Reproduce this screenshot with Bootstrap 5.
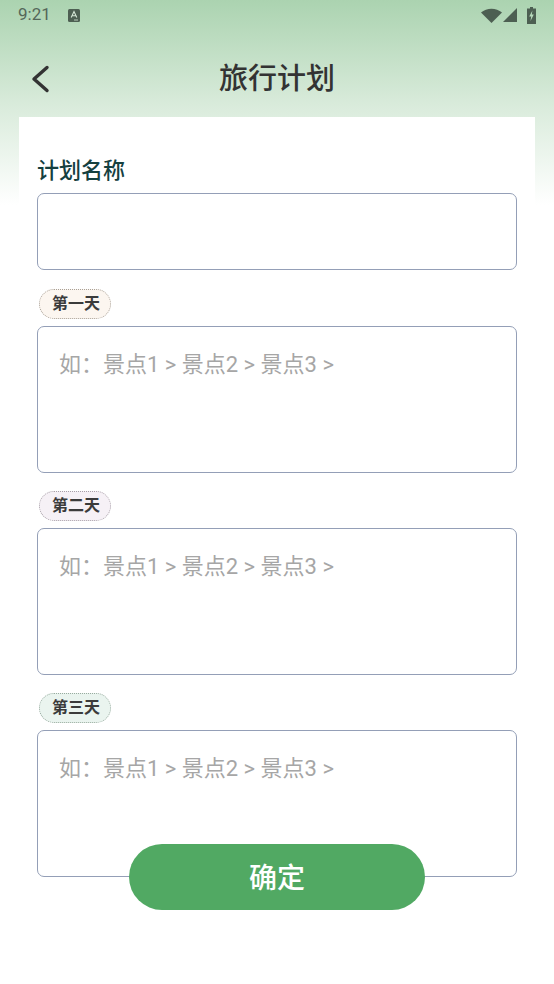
<!DOCTYPE html>
<html lang="zh-CN">
<head>
<meta charset="utf-8">
<title>旅行计划</title>
<link href="https://cdn.jsdelivr.net/npm/bootstrap@5.3.0/dist/css/bootstrap.min.css" rel="stylesheet">
<style>
html,body{height:100%}
body{margin:0;background:#fff;font-family:Roboto,"Noto Sans CJK SC",sans-serif;overflow:hidden}
.screen{height:984px;background:linear-gradient(180deg,#abd3b0 0,#d9ebdb 105px,#ffffff 205px);position:relative}
.sbar{height:30px;padding:0 18px 0 18px;color:#55675a;font-size:17px}
.sbar-a{margin-left:17px}
.sbar-batt{margin-left:10px}
.sbar-sig{margin-left:1px}
.topbar{height:87px;position:relative;color:#333}
.topbar-title{font-size:29px;font-weight:500;line-height:38px;margin-top:11px;color:#333}
.back-btn{position:absolute;left:30px;top:35px;width:22px;height:28px}
.sheet{margin:0 19px;background:#fff;padding:40px 18px 0;height:760px}
.plan-label{font-size:22px;font-weight:500;line-height:28px;color:#15403f;margin:0 0 8px 0}
.plan-name.form-control{height:77px;border:1px solid #949fb7;border-radius:7px;box-shadow:none;background:#fff;margin-bottom:1px}
.plan-day.form-control{height:147px;border:1px solid #949fb7;border-radius:7px;padding:21px 21px;font-size:22px;line-height:34px;resize:none;background:#fff;box-shadow:none;font-weight:400}
.plan-day::placeholder{color:#a6a6a6;opacity:1}
.day-tag{display:inline-block;width:72px;height:30px;line-height:28px;text-align:center;border-radius:15px;font-size:16px;font-weight:700;color:#3b3b3b;border:1px dotted #a8a096;margin:18px 0 7px 2px;padding-left:2px}
.tag-1{background:#fcf6f0}
.tag-2{background:#f6f1f6;border-color:#a8a0a8}
.tag-3{background:#eaf4ef;border-color:#98ab9f}
.day-group{display:flex;flex-direction:column;align-items:flex-start}
.ok-btn.btn{position:absolute;left:129px;top:844px;width:296px;height:66px;border-radius:33px;background:#51a963;border:0;color:#fff;font-size:28px;font-weight:500;line-height:66px;padding:2px 0 0}
</style>
</head>
<body>
<div class="screen">
  <div class="sbar d-flex align-items-center justify-content-between">
    <div class="d-flex align-items-center">
      <span>9:21</span>
      <svg class="sbar-a" width="12" height="13" viewBox="0 0 12 13"><rect width="12" height="13" rx="1.5" fill="#4d5f52"/><path d="M3.2 8.6 6 2.6l2.8 6M4.2 6.7h3.6" fill="none" stroke="#d5e6d6" stroke-width="1.1"/><path d="M6 11h4" stroke="#d5e6d6" stroke-width=".8"/></svg>
    </div>
    <div class="d-flex align-items-center">
      <svg width="21" height="15" viewBox="0 0 21 15"><path d="M0 4.6C5.6-.6 15.4-.6 21 4.6L10.5 15z" fill="#4d5f52"/></svg>
      <svg width="14" height="14" viewBox="0 0 14 14" class="sbar-sig"><path d="M14 0v14H0z" fill="#4d5f52"/></svg>
      <svg width="9" height="17" viewBox="0 0 9 17" class="sbar-batt"><path d="M3 0h3v1.6h3V17H0V1.6h3z" fill="#4d5f52"/><path d="M5.4 3.4 2.2 9.6h2l-.7 4.4 3.3-6.4H4.8z" fill="#b7dabb"/></svg>
    </div>
  </div>
  <div class="topbar d-flex align-items-center justify-content-center">
    <svg class="back-btn" viewBox="0 0 22 28"><path d="M17 2.5 4 14l13 11.5" fill="none" stroke="#333" stroke-width="3.4" stroke-linecap="round" stroke-linejoin="round"/></svg>
    <div class="topbar-title">旅行计划</div>
  </div>
  <div class="sheet">
    <div class="plan-label">计划名称</div>
    <input class="form-control plan-name" type="text">
    <div class="day-group">
      <span class="day-tag tag-1">第一天</span>
      <textarea class="form-control plan-day" placeholder="如&#xFF1A;景点1 > 景点2 > 景点3 >"></textarea>
    </div>
    <div class="day-group">
      <span class="day-tag tag-2">第二天</span>
      <textarea class="form-control plan-day" placeholder="如&#xFF1A;景点1 > 景点2 > 景点3 >"></textarea>
    </div>
    <div class="day-group">
      <span class="day-tag tag-3">第三天</span>
      <textarea class="form-control plan-day" placeholder="如&#xFF1A;景点1 > 景点2 > 景点3 >"></textarea>
    </div>
  </div>
  <button type="button" class="btn ok-btn">确定</button>
</div>
<script src="https://cdn.jsdelivr.net/npm/bootstrap@5.3.0/dist/js/bootstrap.bundle.min.js"></script>
</body>
</html>
